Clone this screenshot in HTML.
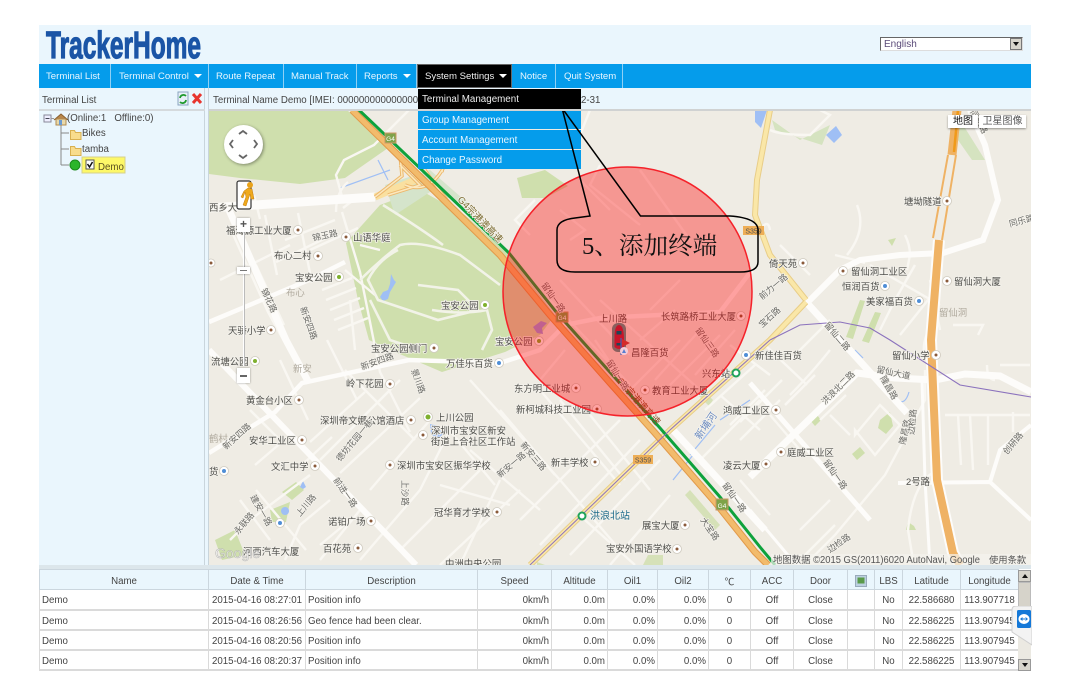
<!DOCTYPE html>
<html><head><meta charset="utf-8"><style>
html,body{margin:0;padding:0;background:#fff;width:1070px;height:683px;overflow:hidden}
body{position:relative;font-family:"Liberation Sans","Noto Sans CJK SC",sans-serif;font-size:9.7px;color:#444;filter:blur(.3px)}
.a{position:absolute}
.nav{position:absolute;top:64px;height:24px;line-height:25px;color:#e8f6ff;text-align:left;border-right:1px solid #8fd0f5;box-sizing:border-box;font-size:9.6px;white-space:nowrap}
.arr{display:inline-block;width:0;height:0;border-left:4px solid transparent;border-right:4px solid transparent;border-top:4px solid #fff;margin-left:5px;vertical-align:1px}
.dd{position:absolute;left:418px;width:163px;height:19px;line-height:21px;background:#059ceb;color:#e8f6ff;padding-left:4px;box-sizing:border-box;font-size:9.8px}
table{position:absolute;left:39px;top:569px;width:979px;border-collapse:collapse;table-layout:fixed;font-size:9.7px;color:#444}
td,th{height:20px;padding:3px 2px 0;box-sizing:border-box;white-space:nowrap;overflow:hidden;font-weight:normal;border:1px solid #dadada;border-width:0 1px 2px 1px}
th{background:#eaf6fd;border-color:#cbd6de;border-width:1px 1px 1px 1px;height:20px;text-align:center}
.c{text-align:center}.r{text-align:right}
svg text{font-family:"Liberation Sans","Noto Sans CJK SC",sans-serif}
#lbl text{font-size:9.4px;fill:#4e4e4a;stroke:#f4f2ec;stroke-width:1.6px;paint-order:stroke}
#rd text{font-size:8.6px;fill:#6a6a66;stroke:#f6f4ee;stroke-width:1.4px;paint-order:stroke}
</style></head><body>
<div class="a" style="left:39px;top:25px;width:992px;height:39px;background:#eaf6fd"></div>
<svg class="a" style="left:39px;top:25px" width="170" height="39"><text x="7" y="33" font-size="38" font-weight="bold" fill="#1b55a6" stroke="#1b55a6" stroke-width="1.200" textLength="155" lengthAdjust="spacingAndGlyphs">TrackerHome</text></svg>
<div class="a" style="left:880px;top:37px;width:143px;height:14px;background:#fff;border:1px solid #666;border-bottom-color:#ddd;border-right-color:#ddd;box-sizing:border-box;line-height:13px;padding-left:3px;font-size:10px;color:#5a4a78">English</div>
<div class="a" style="left:1010px;top:38px;width:12px;height:12px;background:#d8d5cc;border:1px solid #777;box-sizing:border-box"><div style="margin:3px auto 0;width:0;height:0;border-left:3px solid transparent;border-right:3px solid transparent;border-top:4px solid #111"></div></div>

<div class="a" style="left:39px;top:64px;width:992px;height:24px;background:#059ceb"></div>
<div class="nav" style="left:39px;width:72px;padding-left:7px">Terminal List</div>
<div class="nav" style="left:111px;width:98px;padding-left:8px">Terminal Control<span class="arr"></span></div>
<div class="nav" style="left:209px;width:75px;padding-left:7px">Route Repeat</div>
<div class="nav" style="left:284px;width:73px;padding-left:7px">Manual Track</div>
<div class="nav" style="left:357px;width:60px;padding-left:7px">Reports<span class="arr"></span></div>
<div class="nav" style="left:417px;width:95px;background:#000;border:1px solid #666;color:#eee;line-height:23px;padding-left:7px">System Settings<span class="arr"></span></div>
<div class="nav" style="left:512px;width:44px;padding-left:8px">Notice</div>
<div class="nav" style="left:556px;width:67px;padding-left:8px">Quit System</div>

<div class="a" style="left:39px;top:88px;width:170px;height:477px;background:#eaf6fd"></div>
<div class="a" style="left:204px;top:88px;width:1px;height:477px;background:#c9d5dc"></div>
<div class="a" style="left:208px;top:88px;width:1px;height:477px;background:#c9d5dc"></div>
<div class="a" style="left:209px;top:88px;width:822px;height:22px;background:#eaf6fd"></div>
<div class="a" style="left:39px;top:109px;width:166px;height:2px;background:#d5dadd"></div>
<div class="a" style="left:209px;top:109px;width:822px;height:2px;background:#d0d2d2;z-index:2"></div>
<div class="a" style="left:42px;top:94px;line-height:13px">Terminal List</div>
<div class="a" style="left:213px;top:94px;line-height:13px;white-space:nowrap">Terminal Name Demo [IMEI: 000000000000000</div>
<div class="a" style="left:581px;top:94px;line-height:13px">2-31</div>

<svg class="a" style="left:176px;top:90px" width="30" height="18"><rect x="2" y="2" width="10" height="13" fill="#e8f0f8" stroke="#8aa5c0"/><path d="M4 8a3.500 3.500 0 0 1 6-2M10 10a3.500 3.500 0 0 1-6 2" fill="none" stroke="#1f9a2e" stroke-width="1.800"/><path d="M17 4l8 9M25 4l-8 9" stroke="#e8352e" stroke-width="3"/></svg>

<svg class="a" style="left:39px;top:110px" width="166" height="70">
<rect x="5" y="5" width="7" height="7" fill="#eef" stroke="#889"/><path d="M6.500 8.500h4" stroke="#445"/>
<path d="M12 8.500h3" stroke="#999"/>
<path d="M22 14v41M22 23h8M22 39h8M22 55h8" stroke="#888" fill="none"/>
<path d="M15 10l7-6 7 6" fill="#b9874b" stroke="#8a6030"/><rect x="17" y="9" width="10" height="6" fill="#e8d8a8" stroke="#b08a50"/><rect x="20" y="10" width="3" height="5" fill="#6b9ad0"/>
<g fill="#f8dc8c" stroke="#d8b050"><path d="M31.500 20.500h4l1 2h5.500v7h-10.500z"/><path d="M31.500 36.500h4l1 2h5.500v7h-10.500z"/></g>
<circle cx="36" cy="55" r="5" fill="#2bb52b" stroke="#1a8a1a"/>
<rect x="43" y="47" width="43" height="16" fill="#fdf868" stroke="#d5d08a"/>
<rect x="47" y="50" width="8" height="9" fill="#fff" stroke="#555"/><path d="M48.500 54l2 3 3-5" fill="none" stroke="#111" stroke-width="1.500"/>
<text x="59" y="60" font-size="9.700" fill="#5a5020">Demo</text>
</svg>
<div class="a" style="left:67px;top:112px;line-height:14px;white-space:nowrap">(Online:1 &nbsp; Offline:0)</div>
<div class="a" style="left:82px;top:127px;line-height:14px">Bikes</div>
<div class="a" style="left:82px;top:143px;line-height:14px">tamba</div>

<!-- MAP -->
<svg class="a" style="left:0;top:0" width="1070" height="683">
<defs><clipPath id="m"><rect x="209" y="110" width="822" height="455"/></clipPath></defs>
<g clip-path="url(#m)">
<rect x="209" y="110" width="822" height="455" fill="#efece4"/>
<g fill="#cfdfad">
<path d="M209 110H347L388 148 345 178 300 184 240 178 209 174Z"/>
<path d="M346 243 380 205 420 190 465 215 509 255 555 315 540 335 505 352 442 372 395 352 369 340 358 300Z"/>
<path d="M385 185 430 170 470 205 430 192 395 215Z" fill="#d5e4cb"/>
<path d="M517 178 545 170 568 186 545 198 522 198Z"/>
<path d="M420 110H505L510 122 470 170 440 145Z" fill="#d8e4c8"/>
<path d="M772 120 800 140 830 125 822 145 775 130Z" fill="#d5e3c0"/>
<path d="M960 120 985 160 972 160 958 140Z" fill="#d5e3c0"/>
<path d="M215 540 235 530 245 555 222 560Z M282 492 296 482 304 490 292 500Z M270 510 290 502 286 522 272 522Z M810 420l7-5 4 5-6 6z M880 420l10-8 3 14-7 8-8-6z M852 454l8-7 5 6-8 7z M888 240l8-2-4 8z M916 530h-10l2-8 6 4z M860 300l5 1-12 38-7-2z M875 312l6 1-12 30-7-2z" />
<path d="M643 565l5-10h15v10zM537 562l8 3h-8zM703 390l10 10-4 6-10-10zM690 490l30 35-5 5-30-35z" opacity=".8"/>
</g>
<g fill="#9fbff5">
<path d="M391 274l3 6 2 2-6 10-2 7-5 2-3-4 3-5 5-2 2-6z"/><path d="M826 135l10-9 6 9-8 8z"/><path d="M755 110h12l-6 18-6-6z"/><path d="M430 424l8 2 5 8-6 6-6-6z"/>
<path d="M300 487l3-6 3 6-3 2z"/><path d="M285 507a4 4 0 1 0 .1 0z"/>
<path d="M533 327l8-6 6 2-5 5 1 6-6-1z" fill="#9f96e0"/>
</g>
<g fill="none" stroke="#9fbff5" stroke-width="1.200"><path d="M340 188l50-18M378 160l10 20"/><path d="M673 480l20-25M690 455l25-30M720 420l30-20"/><path d="M855 350l8 8M897 400q8 6 12-8"/></g>
<g fill="none" stroke="#f9f7f2" stroke-width="2.400">
<path d="M343 200l-7-25 8-15 30-15 45-45M343 208l13-10M336 212q0-20 12-30"/>
<path d="M342 212l18 60 20 100 30 60M254 195l6 24M265 215l12 60M298 213l14 70M310 250l48-22M285 240l50-20M276 262l54-26M240 270l50-25M232 232l36 80 22 40M256 265l28 60M220 280l60-30"/>
<path d="M345 270l30 25M360 245l20 5M350 300l5 50M322 290l30-12M326 300l30-12M330 310l30-12M334 320l30-12M338 330l30-12"/>
<path d="M280 360l28 60M327 340l30 60M345 370l70 70M365 392l-55 50M400 380l-80 80M420 398l-80 75M430 420l-60 70M302 465l30-28M445 425l50 60M450 430l-30 60 -60 70M470 450l70 60M440 485l70 20M480 470l-80 80M520 490l-80 75M500 480l-40 85M470 380l90 100 60 70"/>
<path d="M280 440l-30-30M255 465l35-30M256 490l50 60M310 475l-60 45 -20 20M240 500l30 40M330 500l-30 25 -15 35M350 520l-30 25M360 510l-40 50M500 410l55 65M540 390l80 95M560 400l65 80M590 415l60 75M620 420l-100 100M640 440l-100 105M660 460l-90 95M585 520l50 45M610 565l60-70"/>
<path d="M560 280l70 75M550 300l80 85M600 300l100 90M640 340l35-30M680 340l-50 50M700 330l-45 50M720 335l-50 50M735 330l-40 45M595 340l30 45M565 350l-25 30M650 310l30-30"/>
<path d="M720 395l40 35M705 410l50-45M730 425l35-35M740 440l40-40M770 375l-40-30M782 380l-42 42M700 460l60-60M740 480l30 35M765 345l42 40M790 360l40-40M815 375l-30 30"/>
<path d="M790 395q20-20 40-45M830 415l20 20M820 420l26-25M770 415l30 35M800 530l30-30"/>
<path d="M855 435l25-30 20 20-25 30-20-25zM805 555l30-30M925 370v30l-40 75-50 60-30 30M938 470q-25 10-30 60l5 30"/>
<path d="M945 415h85M958 415l3 50M970 415l3 55M988 415l0 50M1013 412v20M995 380q-8 0-8-15M1000 365h30M925 360q-5-20 10-40M953 325h30l-5 10"/>
<path d="M857 205q10 25-10 50M835 255l20 5 10 3M905 235q5 10 5 20l-3 15M870 265l70 40M915 265l-20 35-15 30M940 285l-40 50M940 330l-10-50"/>
<path d="M770 130q10 5 40 5l20-20 -10-5M560 210l25 20 -15 10M530 235l-15-15 20-20M580 180l30 30M760 230q8-12 10 0M810 275l-30-30"/>
<path d="M590 110l-12 30M600 165l-10 20 50 40M640 170l50 70"/>
<path d="M360 280q20-20 40-35 20-5 60 10l40 30M398 250q-20 10-30 30l10 20 60 20 40-10 -20-20-40-5M370 300l20 40 30 10M432 310q30 5 55 0l5 20-10 20M383 205q40 25 60 40" stroke="#f2f3e8" stroke-width="2.600"/>
</g>
<g fill="none" stroke="#fdfcfa" stroke-width="6">
<path d="M209 350 416 565"/>
<path d="M229 210 286 340 309 383" stroke-width="7"/>
<path d="M209 453 275 412 302 383 409 360 500 363 540 350 565 325 600 318 720 312 752 270" stroke-width="4.500"/>
<path d="M209 322 309 280 345 262" stroke-width="4.500"/>
<path d="M673 430 765 530" stroke-width="7" />
<path d="M750 510 792 560 800 565" stroke-width="3"/>
<path d="M750 383 870 520" stroke-width="5"/>
<path d="M807 303 907 413" stroke-width="7"/>
<path d="M750 477 857 373 895 378 935 380 965 374 1000 376 1031 392" stroke-width="7"/>
<path d="M807 303 840 270 860 260 900 255 943 253 983 240 998 200 985 145 970 110" stroke-width="6"/>
<path d="M898 483 990 482 1031 520" stroke-width="4"/>
<path d="M990 482 1000 450 1031 425" stroke-width="4"/>
<path d="M930 565 925 480 922 380" stroke-width="3"/>
<path d="M209 208 375 197" stroke-width="9"/>
</g>
<g fill="none">
<path d="M770 110 757 180 755 215 770 255 806 300" stroke="#e8cd88" stroke-width="6"/>
<path d="M770 110 757 180 755 215 770 255 806 300" stroke="#fae7a8" stroke-width="4"/>
<path d="M806 302 770 340 670 430 530 565" stroke="#e8cd88" stroke-width="6"/>
<path d="M806 302 770 340 670 430 530 565" stroke="#fae7a8" stroke-width="4"/>
<path d="M375 197 420 178" stroke="#fae0a0" stroke-width="7"/>
<path d="M375 197 402 176 400 155 388 145M388 195 420 185 400 165M405 185q25 10 40-20M425 170q30 45 55 62M442 172q2-10-8-15" stroke="#edb86c" stroke-width="3.500"/>
<path d="M375 197 402 176 400 155 388 145M388 195 420 185 400 165M405 185q25 10 40-20M425 170q30 45 55 62M442 172q2-10-8-15" stroke="#fbe8bf" stroke-width="1.500"/>
<path d="M957 110 952 155" stroke="#efb264" stroke-width="9"/>
<path d="M948 155 933 238M956 155 942 240" stroke="#efb264" stroke-width="2"/>
<path d="M958 110 954 152" stroke="#f09a1a" stroke-width="2.500"/>
<path d="M939 240 931 340 937 480 953 553 960 565" stroke="#fdfcfa" stroke-width="12"/>
<path d="M939 240 931 340 937 480 953 553 960 565" stroke="#efb264" stroke-width="8"/>
<path d="M352 110 500 255 550 315 612 385 655 433 715 502 755 552 768 565" stroke="#e29a4a" stroke-width="7"/>
<path d="M352 110 500 255 550 315 612 385 655 433 715 502 755 552 768 565" stroke="#f2bb6c" stroke-width="5"/>
<path d="M359 110 509 253 557 313 617 380 660 428 720 497 760 547 775 565" stroke="#0ea23c" stroke-width="3"/>
<path d="M770 340 800 325 840 322 870 328 890 340 960 385 1031 397" stroke="#8b72bd" stroke-width="1.100"/>
<path d="M770 340 670 430 530 565" stroke="#8b72bd" stroke-width="1"/>
</g>
<g font-size="7" text-anchor="middle">
<rect x="385" y="133" width="11" height="10" fill="#7ea349" stroke="#c96"/><text x="390.500" y="141" fill="#fff" font-size="6.500">G4</text>
<rect x="556" y="312" width="12" height="10" fill="#7ea349" stroke="#c96"/><text x="562" y="320" fill="#fff" font-size="6.500">G4</text>
<rect x="716" y="499" width="12" height="11" fill="#7ea349" stroke="#c96"/><text x="722" y="508" fill="#fff" font-size="6.500">G4</text>
<rect x="633" y="455" width="20" height="9" fill="#eeae56"/><text x="643" y="462.500" fill="#555" font-size="7">S359</text>
<rect x="743" y="226" width="21" height="9" fill="#eeae56"/><text x="753.500" y="233.500" fill="#555" font-size="7">S359</text>
</g>
<g fill="#fff" stroke="#cfcabf" stroke-width=".8">
<circle cx="298" cy="230" r="4.500"/><circle cx="346" cy="237" r="4.500"/><circle cx="318" cy="256" r="4.500"/><circle cx="339" cy="277" r="4.500"/><circle cx="485" cy="305" r="4.500"/><circle cx="271" cy="330" r="4.500"/><circle cx="255" cy="361" r="4.500"/><circle cx="434" cy="348" r="4.500"/><circle cx="499" cy="363" r="4.500"/><circle cx="390" cy="384" r="4.500"/><circle cx="299" cy="400" r="4.500"/><circle cx="411" cy="420" r="4.500"/><circle cx="428" cy="417" r="4.500"/><circle cx="423" cy="435" r="4.500"/><circle cx="302" cy="440" r="4.500"/><circle cx="315" cy="466" r="4.500"/><circle cx="390" cy="465" r="4.500"/><circle cx="371" cy="521" r="4.500"/><circle cx="358" cy="548" r="4.500"/><circle cx="497" cy="512" r="4.500"/><circle cx="595" cy="462" r="4.500"/><circle cx="685" cy="525" r="4.500"/><circle cx="677" cy="549" r="4.500"/><circle cx="539" cy="341" r="4.500"/><circle cx="576" cy="388" r="4.500"/><circle cx="597" cy="409" r="4.500"/><circle cx="645" cy="390" r="4.500"/><circle cx="741" cy="316" r="4.500"/><circle cx="746" cy="355" r="4.500"/><circle cx="803" cy="263" r="4.500"/><circle cx="843" cy="271" r="4.500"/><circle cx="885" cy="286" r="4.500"/><circle cx="919" cy="301" r="4.500"/><circle cx="947" cy="281" r="4.500"/><circle cx="947" cy="201" r="4.500"/><circle cx="936" cy="355" r="4.500"/><circle cx="781" cy="452" r="4.500"/><circle cx="766" cy="464" r="4.500"/><circle cx="776" cy="410" r="4.500"/><circle cx="224" cy="471" r="4.500"/><circle cx="280" cy="523" r="4.500"/><circle cx="211" cy="263" r="4"/>
</g>
<g fill="#8a5a3a">
<circle cx="298" cy="230" r="1.500"/><circle cx="346" cy="237" r="1.500"/><circle cx="318" cy="256" r="1.500"/><circle cx="271" cy="330" r="1.500"/><circle cx="434" cy="348" r="1.500"/><circle cx="390" cy="384" r="1.500"/><circle cx="299" cy="400" r="1.500"/><circle cx="411" cy="420" r="1.500"/><circle cx="302" cy="440" r="1.500"/><circle cx="315" cy="466" r="1.500"/><circle cx="390" cy="465" r="1.500"/><circle cx="371" cy="521" r="1.500"/><circle cx="358" cy="548" r="1.500"/><circle cx="497" cy="512" r="1.500"/><circle cx="595" cy="462" r="1.500"/><circle cx="685" cy="525" r="1.500"/><circle cx="677" cy="549" r="1.500"/><circle cx="576" cy="388" r="1.500"/><circle cx="597" cy="409" r="1.500"/><circle cx="645" cy="390" r="1.500"/><circle cx="741" cy="316" r="1.500"/><circle cx="803" cy="263" r="1.500"/><circle cx="843" cy="271" r="1.500"/><circle cx="947" cy="281" r="1.500"/><circle cx="947" cy="201" r="1.500"/><circle cx="936" cy="355" r="1.500"/><circle cx="781" cy="452" r="1.500"/><circle cx="766" cy="464" r="1.500"/><circle cx="776" cy="410" r="1.500"/><circle cx="423" cy="435" r="1.500"/><circle cx="211" cy="263" r="1.500"/>
</g>
<g fill="#7fb02f"><circle cx="339" cy="277" r="2"/><circle cx="485" cy="305" r="2"/><circle cx="255" cy="361" r="2"/><circle cx="428" cy="417" r="2.500"/><circle cx="539" cy="341" r="2"/></g>
<g fill="#4f8ed6"><circle cx="499" cy="363" r="2"/><circle cx="224" cy="471" r="2"/><circle cx="280" cy="523" r="2"/><circle cx="885" cy="286" r="2"/><circle cx="919" cy="301" r="2"/><circle cx="746" cy="355" r="2"/></g>
<circle cx="582" cy="516" r="3.500" fill="#fff" stroke="#1fa35a" stroke-width="2"/>
<circle cx="736" cy="373" r="3.500" fill="#fff" stroke="#1fa35a" stroke-width="2"/>
<g id="lbl">
<text x="209" y="211">西乡大</text><text x="226" y="234">福海源工业大厦</text><text x="353" y="241">山语华庭</text><text x="274" y="259">布心二村</text><text x="295" y="281">宝安公园</text><text x="441" y="309">宝安公园</text><text x="228" y="334">天骄小学</text><text x="211" y="365">流塘公园</text><text x="371" y="352">宝安公园侧门</text><text x="446" y="367">万佳乐百货</text><text x="495" y="345">宝安公园</text><text x="346" y="387">岭下花园</text><text x="246" y="404">黄金台小区</text><text x="320" y="424">深圳帝文娜公馆酒店</text><text x="436" y="421">上川公园</text><text x="249" y="444">安华工业区</text><text x="431" y="434">深圳市宝安区新安</text><text x="431" y="445">街道上合社区工作站</text><text x="271" y="470">文汇中学</text><text x="397" y="469">深圳市宝安区振华学校</text><text x="328" y="525">诺铂广场</text><text x="323" y="552">百花苑</text><text x="434" y="516">冠华育才学校</text><text x="243" y="555">河西汽车大厦</text><text x="445" y="567">中洲中央公园</text><text x="551" y="466">新丰学校</text><text x="514" y="392">东方明工业城</text><text x="516" y="413">新柯城科技工业园</text><text x="652" y="394">教育工业大厦</text><text x="631" y="356">昌隆百货</text><text x="599" y="322">上川路</text><text x="661" y="320">长筑路桥工业大厦</text><text x="702" y="377">兴东站</text><text x="723" y="414">鸿威工业区</text><text x="723" y="469">凌云大厦</text><text x="755" y="359">新佳佳百货</text><text x="769" y="267">倚天苑</text><text x="851" y="275">留仙洞工业区</text><text x="842" y="290">恒润百货</text><text x="866" y="305">美家福百货</text><text x="954" y="285">留仙洞大厦</text><text x="904" y="205">塘坳隧道</text><text x="892" y="359">留仙小学</text><text x="787" y="456">庭威工业区</text><text x="642" y="529">展宝大厦</text><text x="606" y="552">宝安外国语学校</text><text x="906" y="485">2号路</text>
<text x="590" y="519" style="fill:#1d6a8a;font-size:10px">洪浪北站</text>
<text x="939" y="316" style="fill:#b0aa9e;stroke:none">留仙洞</text><text x="286" y="296" style="fill:#b0aa9e;stroke:none">布心</text><text x="293" y="372" style="fill:#b0aa9e;stroke:none">新安</text><text x="209" y="442" style="fill:#b0aa9e;stroke:none">鹤村</text>
<text x="209" y="475">货</text>
</g>
<g id="rd">
<text transform="translate(457 200) rotate(46)" style="fill:#7a6a30;font-size:9.500px">G4宗港澳高速</text>
<text transform="translate(616 381) rotate(48)" style="fill:#8a4a20;font-size:9.500px;stroke:none">G4宗港澳高速</text>
<text transform="translate(261 290) rotate(65)">锦花路</text>
<text transform="translate(300 308) rotate(70)">新安四路</text>
<text transform="translate(313 241) rotate(-12)">锦玉路</text>
<text transform="translate(226 450) rotate(-42)">新安四路</text>
<text transform="translate(362 370) rotate(-20)">新安四路</text>
<text transform="translate(411 370) rotate(70)">景川路</text>
<text transform="translate(340 462) rotate(-50)">德坊花园一巷</text>
<text transform="translate(333 480) rotate(55)">前进一路</text>
<text transform="translate(250 497) rotate(60)">建安一路</text>
<text transform="translate(300 517) rotate(-50)">上川路</text>
<text transform="translate(238 535) rotate(-50)">永联路</text>
<text transform="translate(402 480) rotate(90)">上沙路</text>
<text transform="translate(541 285) rotate(55)">留仙一路</text>
<text transform="translate(606 362) rotate(58)">留仙一路</text>
<text transform="translate(695 330) rotate(55)">留仙三路</text>
<text transform="translate(520 445) rotate(50)">新安三路</text>
<text transform="translate(500 478) rotate(-40)">新安一路</text>
<text transform="translate(700 440) rotate(-55)" style="fill:#6a8ac0;font-size:10px">新埔河</text>
<text transform="translate(722 485) rotate(55)">留仙一路</text>
<text transform="translate(700 520) rotate(55)">大宝路</text>
<text transform="translate(762 300) rotate(-40)">前力一路</text>
<text transform="translate(762 328) rotate(-42)">宝石路</text>
<text transform="translate(824 325) rotate(50)">留仙二路</text>
<text transform="translate(825 405) rotate(-45)">洪浪北二路</text>
<text transform="translate(876 372) rotate(12)">留仙大道</text>
<text transform="translate(880 378) rotate(60)">隆昌路</text>
<text transform="translate(905 445) rotate(-78)">隆昌路</text>
<text transform="translate(914 435) rotate(-85)">边检路</text>
<text transform="translate(823 462) rotate(55)">留仙一路</text>
<text transform="translate(830 553) rotate(-35)">边检路</text>
<text transform="translate(1007 455) rotate(-50)">创研路</text>
<text transform="translate(970 112) rotate(60)">同乐路</text>
<text transform="translate(1010 227) rotate(-15)">同乐路</text>
</g>
<circle cx="627.500" cy="291.500" r="124.500" fill="#ff0000" fill-opacity=".36" stroke="#f5222a" stroke-width="1.500"/>
<rect x="612" y="323" width="14" height="29" rx="6" fill="#333" opacity=".55"/>
<path d="M614.500 338q0-13 4.500-13t5 13v9q-5 4-9.500 0z" fill="#c8152a"/><rect x="616.500" y="331" width="5" height="3.500" fill="#245"/><rect x="616.500" y="343" width="5" height="2.500" fill="#245"/>
<path d="M621 338v17" stroke="#4a62b8" stroke-width="1.200"/><path d="M622 339l8 4-8 4z" fill="#d52a2a"/>
<circle cx="624" cy="351" r="4" fill="#f4ccd8"/><path d="M622 353h4l-2-4z" fill="#5a7fd0"/>
<rect x="771" y="554" width="260" height="11" fill="#f5f3ee" opacity=".7"/>
<text x="773" y="563" font-size="9.700" fill="#555" textLength="207" lengthAdjust="spacingAndGlyphs">地图数据 ©2015 GS(2011)6020 AutoNavi, Google</text>
<text x="989" y="563" font-size="9.300" fill="#555">使用条款</text>
<text x="215" y="558" font-size="14" fill="#fff" stroke="#aaa" stroke-width=".6" opacity=".75">Google</text>
</g>
</svg>

<!-- dropdown -->
<div class="dd" style="top:89px;height:21px;background:#000;color:#eee">Terminal Management</div>
<div class="dd" style="top:110px">Group Management</div>
<div class="dd" style="top:130px">Account Management</div>
<div class="dd" style="top:150px">Change Password</div>

<!-- callout above dropdown -->
<svg class="a" style="left:0;top:0" width="1070" height="683">
<path d="M590 216 562 108 640.500 216 730 216 Q758 218 758 230 L758 262 Q758 272 740 272 L575 272 Q557 272 557 260 L557 230 Q557 220 575 218Z" fill="none" stroke="#000" stroke-width="1.500"/>
<text x="582" y="254" font-size="24.600" fill="#111" style='font-family:"Liberation Serif","Noto Serif CJK SC",serif'>5、添加终端</text>
</svg>

<!-- pan -->
<div class="a" style="left:224px;top:125px;width:39px;height:39px;border-radius:50%;background:#fff;box-shadow:1px 1px 3px rgba(0,0,0,.4)"></div>
<svg class="a" style="left:224px;top:125px" width="39" height="39"><path d="M15 9l4-3 4 3M15 30l4 3 4-3M9 15l-3 4 3 4M30 15l3 4-3 4" fill="none" stroke="#666" stroke-width="1.800"/></svg>
<!-- pegman -->
<svg class="a" style="left:235px;top:179px" width="22" height="32"><rect x="2" y="2" width="14" height="28" rx="2" fill="#fff" stroke="#333" stroke-width="1.200"/><circle cx="15" cy="6" r="3" fill="#e9a21a"/><path d="M9 12l4-3 4 1 2 10-3 0-1-5-2 6-2 6-3-1 3-8-1-5-2 6-2-1z" fill="#efa91c" stroke="#c07a10" stroke-width=".5"/></svg>
<!-- zoom -->
<div class="a" style="left:243px;top:232px;width:1px;height:134px;background:#fff;border-right:1px solid #bbb"></div>
<div class="a" style="left:237px;top:218px;width:13px;height:14px;background:#fff;box-shadow:0 0 2px rgba(0,0,0,.4);text-align:center;line-height:13px;font-size:12px;color:#555;font-weight:bold">+</div>
<div class="a" style="left:237px;top:267px;width:13px;height:7px;background:#fff;box-shadow:0 0 2px rgba(0,0,0,.4)"><div style="margin:3px 3px 0;height:1px;background:#777"></div></div>
<div class="a" style="left:237px;top:368px;width:13px;height:15px;background:#fff;box-shadow:0 0 2px rgba(0,0,0,.4)"><div style="margin:7px 3px 0;height:2px;background:#666"></div></div>
<!-- map type -->
<div class="a" style="left:948px;top:115px;width:30px;height:13px;background:#fff;box-shadow:0 1px 2px rgba(0,0,0,.4);text-align:center;line-height:13px;font-size:10px;color:#111">地图</div>
<div class="a" style="left:979px;top:115px;width:47px;height:13px;background:#fff;box-shadow:0 1px 2px rgba(0,0,0,.4);text-align:center;line-height:13px;font-size:10px;color:#555">卫星图像</div>

<div class="a" style="left:39px;top:565px;width:992px;height:4px;background:#dce6eb"></div>
<table>
<colgroup><col style="width:169px"><col style="width:97px"><col style="width:172px"><col style="width:74px"><col style="width:56px"><col style="width:50px"><col style="width:51px"><col style="width:42px"><col style="width:43px"><col style="width:54px"><col style="width:27px"><col style="width:28px"><col style="width:58px"><col style="width:58px"></colgroup>
<tr><th>Name</th><th>Date &amp; Time</th><th>Description</th><th>Speed</th><th>Altitude</th><th>Oil1</th><th>Oil2</th><th>℃</th><th>ACC</th><th>Door</th><th><svg width="12" height="12" style="vertical-align:middle"><rect x=".5" y=".5" width="11" height="11" fill="#bcd0e0" stroke="#9ab"/><rect x="2.500" y="2.500" width="7" height="6" fill="#5a9a4a"/></svg></th><th>LBS</th><th>Latitude</th><th>Longitude</th></tr>
<tr><td>Demo</td><td class="c">2015-04-16 08:27:01</td><td>Position info</td><td class="r">0km/h</td><td class="r">0.0m</td><td class="r">0.0%</td><td class="r">0.0%</td><td class="c">0</td><td class="c">Off</td><td class="c">Close</td><td></td><td class="c">No</td><td class="c">22.586680</td><td class="c">113.907718</td></tr>
<tr><td>Demo</td><td class="c">2015-04-16 08:26:56</td><td>Geo fence had been clear.</td><td class="r">0km/h</td><td class="r">0.0m</td><td class="r">0.0%</td><td class="r">0.0%</td><td class="c">0</td><td class="c">Off</td><td class="c">Close</td><td></td><td class="c">No</td><td class="c">22.586225</td><td class="c">113.907945</td></tr>
<tr><td>Demo</td><td class="c">2015-04-16 08:20:56</td><td>Position info</td><td class="r">0km/h</td><td class="r">0.0m</td><td class="r">0.0%</td><td class="r">0.0%</td><td class="c">0</td><td class="c">Off</td><td class="c">Close</td><td></td><td class="c">No</td><td class="c">22.586225</td><td class="c">113.907945</td></tr>
<tr><td>Demo</td><td class="c">2015-04-16 08:20:37</td><td>Position info</td><td class="r">0km/h</td><td class="r">0.0m</td><td class="r">0.0%</td><td class="r">0.0%</td><td class="c">0</td><td class="c">Off</td><td class="c">Close</td><td></td><td class="c">No</td><td class="c">22.586225</td><td class="c">113.907945</td></tr>
</table>
<div class="a" style="left:1018px;top:570px;width:13px;height:101px;background:#ebe9e2"></div>
<div class="a" style="left:1018px;top:570px;width:13px;height:12px;background:#d8d5cc;border:1px solid #999;box-sizing:border-box"><div style="margin:3px auto 0;width:0;height:0;border-left:3px solid transparent;border-right:3px solid transparent;border-bottom:4px solid #111"></div></div>
<div class="a" style="left:1018px;top:582px;width:13px;height:36px;background:#d6d3ca;border:1px solid #bbb;box-sizing:border-box"></div>
<div class="a" style="left:1018px;top:659px;width:13px;height:12px;background:#d8d5cc;border:1px solid #999;box-sizing:border-box"><div style="margin:3px auto 0;width:0;height:0;border-left:3px solid transparent;border-right:3px solid transparent;border-top:4px solid #111"></div></div>
<svg class="a" style="left:1010px;top:606px" width="22" height="42"><path d="M22 0H6Q2 0 2 4V26L22 39Z" fill="#f3f3f3" stroke="#d0d0d0"/><rect x="7" y="4" width="14" height="18" rx="1.500" fill="#1478d8"/><ellipse cx="14" cy="13" rx="5.500" ry="5" fill="#fff"/><path d="M10 13l2.500-2v4zM18 13l-2.500-2v4zM12 12.500h4v1h-4z" fill="#1478d8"/></svg>
</body></html>
